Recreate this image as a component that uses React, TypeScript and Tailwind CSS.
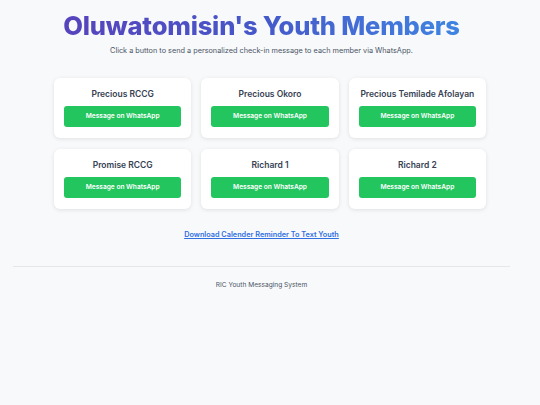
import React from 'react';

const members = [
  'Precious RCCG',
  'Precious Okoro',
  'Precious Temilade Afolayan',
  'Promise RCCG',
  'Richard 1',
  'Richard 2',
];

export default function App() {
  return (
    <div
      className="min-h-[405px] bg-[#f8f9fb] text-gray-800"
      style={{ fontFamily: 'Inter, "Noto Sans", sans-serif' }}
    >
      <div className="w-[523px]">
        <header className="pt-[9px] text-center">
          <h1 className="bg-gradient-to-r from-[#5a3cb8] via-[#4558c9] to-[#3a92ea] bg-clip-text text-[25.5px] font-extrabold leading-[34px] tracking-[-0.2px] text-transparent">
            Oluwatomisin's Youth Members
          </h1>
          <p className="mt-[2px] text-[7.3px] leading-[12px] text-gray-600">
            Click a button to send a personalized check-in message to each member via WhatsApp.
          </p>
        </header>

        <main className="ml-[54px] mt-[21px] grid w-[432px] grid-cols-3 gap-x-[10px] gap-y-[11px]">
          {members.map((name) => (
            <div
              key={name}
              className="flex h-[60px] flex-col items-center rounded-[6px] bg-white px-[10px] pt-[10px] shadow-[0_1px_4px_rgba(0,0,0,0.1)]"
            >
              <h2 className="whitespace-nowrap text-[8.5px] font-semibold leading-[12px] text-gray-700">{name}</h2>
              <button className="mt-[6px] h-[21px] w-full rounded-[3px] bg-[#22c55e] text-[6.6px] font-semibold text-white">
                Message on WhatsApp
              </button>
            </div>
          ))}
        </main>

        <div className="mt-[10px] text-center">
          <a href="#" className="text-[7.3px] font-semibold text-[#2f6fe0] underline">
            Download Calender Reminder To Text Youth
          </a>
        </div>

        <footer className="mx-[13px] mt-[23px] border-t border-gray-200 pt-[14px] text-center">
          <p className="text-[6.6px] text-gray-600">RIC Youth Messaging System</p>
        </footer>
      </div>
    </div>
  );
}
